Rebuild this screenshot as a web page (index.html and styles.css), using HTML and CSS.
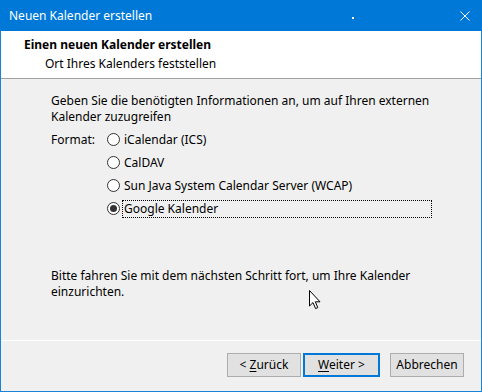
FILE: index.html
```html
<!DOCTYPE html>
<html lang="de">
<head>
<meta charset="UTF-8">
<meta name="viewport" content="width=device-width, initial-scale=1.0">
<title>Neuen Kalender erstellen</title>
<link rel="stylesheet" href="styles.css">
</head>
<body>

<div class="window">
  <div class="titlebar">
    <span class="title">Neuen Kalender erstellen</span>
    <span class="title-dot"></span>
    <span class="close">
      <svg width="10" height="10" viewBox="0 0 10 10">
        <path d="M0.5 0.5 L9.5 9.5 M9.5 0.5 L0.5 9.5" stroke="#fff" stroke-width="1" fill="none"/>
      </svg>
    </span>
  </div>

  <div class="header">
    <div class="header-title">Einen neuen Kalender erstellen</div>
    <div class="header-sub">Ort Ihres Kalenders feststellen</div>
  </div>

  <div class="content">
    <p class="intro">Geben Sie die benötigten Informationen an, um auf Ihren externen<br>Kalender zuzugreifen</p>

    <div class="format">
      <div class="format-label">Format:</div>
      <div class="options">
        <div class="option"><span class="radio"></span><span class="option-text">iCalendar (ICS)</span></div>
        <div class="option"><span class="radio"></span><span class="option-text">CalDAV</span></div>
        <div class="option"><span class="radio"></span><span class="option-text">Sun Java System Calendar Server (WCAP)</span></div>
        <div class="option"><span class="radio checked"></span><span class="option-text focused">Google Kalender</span></div>
      </div>
    </div>

    <p class="outro">Bitte fahren Sie mit dem nächsten Schritt fort, um Ihre Kalender<br>einzurichten.</p>

    <svg class="cursor" width="13" height="20" viewBox="0 0 13 20">
      <path d="M0.5 0.5 L0.5 16 L4 12.6 L6.6 18.6 L8.8 17.6 L6.3 11.8 L11 11.8 Z" fill="#fff" stroke="#000" stroke-width="1" stroke-linejoin="miter"/>
    </svg>
  </div>

  <div class="footer">
    <button class="btn">&lt; <u>Z</u>urück</button>
    <button class="btn default"><u>W</u>eiter &gt;</button>
    <button class="btn cancel">Abbrechen</button>
  </div>
</div>

</body>
</html>
```

FILE: styles.css
```css
body {
  margin: 0;
  padding: 0;
  font-family: "Noto Sans", "Open Sans", sans-serif;
  font-size: 12px;
  color: #000;
  background: #f0f0f0;
}

.window {
  width: 482px;
  height: 392px;
  box-sizing: border-box;
  border: 1px solid #1883d7;
  border-top: none;
  display: flex;
  flex-direction: column;
  background: #f0f0f0;
}

.titlebar {
  height: 31px;
  flex-shrink: 0;
  margin: 0 -1px;
  background: #0078d7;
  color: #fff;
  display: flex;
  align-items: center;
  padding-left: 9px;
  position: relative;
}

.title {
  flex: 1;
  line-height: 16px;
}

.title-dot {
  position: absolute;
  left: 352px;
  top: 17px;
  width: 2px;
  height: 2px;
  background: #fff;
}

.close {
  width: 46px;
  height: 31px;
  display: flex;
  align-items: center;
  justify-content: center;
  margin-right: -6px;
}

.close svg {
  display: block;
}

/* white band with the wizard step */
.header {
  height: 48px;
  flex-shrink: 0;
  box-sizing: border-box;
  background: #fff;
  border-bottom: 1px solid #a0a0a0;
  padding: 6px 0 0 23px;
}

.header-title {
  font-weight: bold;
  line-height: 16px;
}

.header-sub {
  line-height: 16px;
  margin-top: 3px;
  padding-left: 21px;
}

.content {
  flex: 1;
  padding: 14px 0 0 50px;
  position: relative;
  border-bottom: 1px solid #fff;
}

.intro,
.outro {
  margin: 0;
  line-height: 16px;
}

.format {
  display: flex;
  margin-top: 3px;
}

.format-label {
  width: 56px;
  line-height: 23px;
}

.option {
  height: 23px;
  display: flex;
  align-items: center;
}

.radio {
  width: 13px;
  height: 13px;
  box-sizing: border-box;
  border: 1px solid #333;
  border-radius: 50%;
  background: #fff;
  display: flex;
  align-items: center;
  justify-content: center;
  margin-right: 2px;
}

.radio.checked::after {
  content: "";
  width: 7px;
  height: 7px;
  border-radius: 50%;
  background: #333;
}

.option-text {
  line-height: 16px;
  padding: 0 1px;
  border: 1px dotted transparent;
}

.option-text.focused {
  border-color: #000;
  width: 306px;
}

.outro {
  margin-top: 48px;
}

.cursor {
  position: absolute;
  left: 308px;
  top: 211px;
}

.footer {
  height: 50px;
  flex-shrink: 0;
  display: flex;
  align-items: flex-start;
  padding: 12px 0 0 226px;
  box-sizing: border-box;
}

.btn {
  font-family: inherit;
  font-size: 12px;
  width: 74px;
  height: 24px;
  padding: 0;
  background: #e1e1e1;
  border: 1px solid #adadad;
  color: #000;
  line-height: 16px;
}

.btn.default {
  width: 77px;
  margin-left: 2px;
  border: 2px solid #0078d7;
}

.btn.cancel {
  margin-left: 10px;
}

u {
  text-decoration-thickness: 1px;
  text-underline-offset: 2px;
}
```
